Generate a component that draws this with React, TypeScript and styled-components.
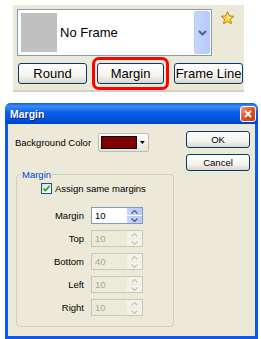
import React from 'react';
import styled, { createGlobalStyle } from 'styled-components';

const GlobalStyle = createGlobalStyle`
    html, body {
        margin: 0;
        padding: 0;
        background: #ffffff;
    }
    body {
        font-family: "Liberation Sans", Tahoma, sans-serif;
    }
`;

const Page = styled.div`
    width: 261px;
    height: 339px;
    overflow: hidden;
    display: flex;
    flex-direction: column;
`;

const TopPanel = styled.div`
    margin: 5px 0 0 13px;
    width: 231px;
    height: 87px;
    background: #ece9d8;
    border-bottom: 2px solid #d4d0c8;
    box-sizing: border-box;
    padding: 4px 0 0 4px;
    display: flex;
    flex-direction: column;
    gap: 7px;
`;

const ComboRow = styled.div`
    display: flex;
    align-items: flex-start;
    gap: 8px;
`;

const Combo = styled.div`
    width: 195px;
    height: 47px;
    box-sizing: border-box;
    border: 1px solid #7f9db9;
    background: #ffffff;
    display: flex;
    align-items: center;
    padding: 3px 1px 3px 3px;
`;

const Swatch = styled.div`
    width: 36px;
    height: 39px;
    background: #c0c0c0;
`;

const ComboText = styled.div`
    flex: 1;
    padding-left: 3px;
    font-size: 13px;
    color: #000;
`;

const DropButton = styled.div`
    width: 16px;
    height: 43px;
    border-radius: 2px;
    background: linear-gradient(to right, #c6d6fc, #b6c9f7);
    border: 1px solid #bccbf2;
    box-sizing: border-box;
    display: flex;
    align-items: center;
    justify-content: center;
`;

const StarBox = styled.div`
    padding-top: 2px;
`;

const ButtonRow = styled.div`
    display: flex;
    align-items: center;
    gap: 7px;
    padding-left: 1px;
`;

const XpButton = styled.button<{ $w: number }>`
    width: ${p => p.$w}px;
    height: 21px;
    padding: 0;
    border: 1px solid #003c74;
    border-radius: 3px;
    background: linear-gradient(to bottom, #ffffff 0%, #f5f4ef 60%, #dcd8cc 100%);
    font-family: "Liberation Sans", Tahoma, sans-serif;
    font-size: 13px;
    color: #000;
`;

const Highlight = styled.div`
    margin: -6px -2px;
    padding: 3px 2px;
    border: 3px solid #ff0000;
    border-radius: 7px;
    display: flex;
`;

const Dialog = styled.div`
    margin: 11px 0 0 5px;
    width: 253px;
    height: 236px;
    box-sizing: border-box;
    background: #0c58ea;
    border-radius: 6px 6px 0 0;
    display: flex;
    flex-direction: column;
    padding: 0 3px 3px 3px;
`;

const TitleBar = styled.div`
    height: 21px;
    margin: 0 -3px;
    padding: 0 2px 0 5px;
    border-radius: 6px 6px 0 0;
    background: linear-gradient(to bottom, #0a5fe8 0%, #3d8bf8 15%, #0a5fe8 45%, #0052dd 80%, #0042c8 100%);
    display: flex;
    align-items: center;
    justify-content: space-between;
`;

const Title = styled.div`
    font-size: 10.5px;
    font-weight: bold;
    color: #ffffff;
    text-shadow: 1px 1px 0 #0a1e80;
`;

const CloseBox = styled.div`
    width: 16px;
    height: 16px;
    box-sizing: border-box;
    border: 1px solid #ffffff;
    border-radius: 3px;
    background: linear-gradient(to bottom right, #f0a080, #e05020 50%, #c83c10);
    display: flex;
    align-items: center;
    justify-content: center;
`;

const Body = styled.div`
    flex: 1;
    background: #ece9d8;
    display: grid;
    grid-template-columns: 170px 1fr;
    padding: 7px 0 0 0;
    font-size: 9.5px;
    color: #000;
`;

const LeftCol = styled.div`
    display: flex;
    flex-direction: column;
    padding-left: 7px;
`;

const ColorRow = styled.div`
    display: flex;
    align-items: center;
    gap: 6px;
    height: 20px;
    padding-top: 1px;
`;

const ColorLabel = styled.span`
    width: 77px;
    white-space: nowrap;
`;

const ColorButton = styled.div`
    width: 51px;
    height: 19px;
    box-sizing: border-box;
    border: 1px solid #c0bdb0;
    border-radius: 2px;
    background: linear-gradient(to bottom, #ffffff, #e6e3d6);
    display: flex;
    align-items: center;
    padding: 0 3px 0 2px;
    gap: 3px;
`;

const ColorChip = styled.div<{ $c: string }>`
    width: 38px;
    height: 13px;
    background: ${p => p.$c};
    border: 1px solid #000;
    box-sizing: border-box;
`;

const Group = styled.fieldset`
    margin: 17px 0 0 1px;
    padding: 0;
    width: 158px;
    height: 158px;
    box-sizing: border-box;
    border: 1px solid #d0d0bf;
    border-radius: 4px;
`;

const Legend = styled.legend`
    margin-left: 4px;
    padding: 0 1px;
    color: #0046d5;
    font-size: 9.5px;
`;

const CheckRow = styled.div`
    display: flex;
    align-items: center;
    gap: 3px;
    margin: 1px 0 0 24px;
    height: 14px;
`;

const CheckBox = styled.div`
    width: 11px;
    height: 11px;
    box-sizing: border-box;
    border: 1px solid #1c5180;
    background: linear-gradient(to bottom right, #dcdcd7, #ffffff);
    display: flex;
    align-items: center;
    justify-content: center;
`;

const Fields = styled.div`
    display: grid;
    grid-template-columns: 67px 52px;
    column-gap: 7px;
    row-gap: 6px;
    margin-top: 12px;
    align-items: center;
`;

const FieldLabel = styled.div`
    text-align: right;
`;

const SpinBox = styled.div<{ $disabled?: boolean }>`
    height: 17px;
    box-sizing: border-box;
    border: 1px solid ${p => (p.$disabled ? '#c9c7ba' : '#7f9db9')};
    background: ${p => (p.$disabled ? '#ebeadb' : '#ffffff')};
    display: flex;
    align-items: stretch;
`;

const SpinValue = styled.div<{ $disabled?: boolean }>`
    flex: 1;
    padding-left: 3px;
    display: flex;
    align-items: center;
    color: ${p => (p.$disabled ? '#aca899' : '#000')};
`;

const SpinButtons = styled.div`
    width: 15px;
    display: flex;
    flex-direction: column;
    gap: 1px;
`;

const SpinHalf = styled.div<{ $disabled?: boolean }>`
    flex: 1;
    background: ${p => (p.$disabled ? '#f3f2ea' : 'linear-gradient(to right, #c6d6fc, #b6c9f7)')};
    display: flex;
    align-items: center;
    justify-content: center;
`;

const RightCol = styled.div`
    display: flex;
    flex-direction: column;
    gap: 6px;
    padding: 0 0 0 8px;
`;

const DlgButton = styled.button`
    width: 64px;
    height: 17px;
    padding: 0;
    border: 1px solid #003c74;
    border-radius: 3px;
    background: linear-gradient(to bottom, #ffffff 0%, #f5f4ef 60%, #dcd8cc 100%);
    font-family: "Liberation Sans", Tahoma, sans-serif;
    font-size: 9.5px;
    color: #000;
`;

const Arrow = ({ up, color }: { up: boolean; color: string }) => (
    <svg width="7" height="4" viewBox="0 0 7 4">
        <path d={up ? 'M0.5 3.5 L3.5 0.5 L6.5 3.5' : 'M0.5 0.5 L3.5 3.5 L6.5 0.5'} fill="none" stroke={color} strokeWidth="1.3" />
    </svg>
);

const Spin = ({ value, disabled }: { value: string; disabled?: boolean }) => (
    <SpinBox $disabled={disabled}>
        <SpinValue $disabled={disabled}>{value}</SpinValue>
        <SpinButtons>
            <SpinHalf $disabled={disabled}>
                <Arrow up color={disabled ? '#c9c7ba' : '#4d6185'} />
            </SpinHalf>
            <SpinHalf $disabled={disabled}>
                <Arrow up={false} color={disabled ? '#c9c7ba' : '#4d6185'} />
            </SpinHalf>
        </SpinButtons>
    </SpinBox>
);

const fields = [
    { label: 'Margin', value: '10', disabled: false },
    { label: 'Top', value: '10', disabled: true },
    { label: 'Bottom', value: '40', disabled: true },
    { label: 'Left', value: '10', disabled: true },
    { label: 'Right', value: '10', disabled: true },
];

export default function App() {
    return (
        <Page>
            <GlobalStyle />
            <TopPanel>
                <ComboRow>
                    <Combo>
                        <Swatch />
                        <ComboText>No Frame</ComboText>
                        <DropButton>
                            <svg width="9" height="6" viewBox="0 0 9 6">
                                <path d="M1 1 L4.5 4.5 L8 1" fill="none" stroke="#4d6185" strokeWidth="2" />
                            </svg>
                        </DropButton>
                    </Combo>
                    <StarBox>
                        <svg width="15" height="14" viewBox="0 0 15 14">
                            <path d="M7.5 0.8 L9.4 4.9 L13.9 5.3 L10.5 8.3 L11.5 12.8 L7.5 10.5 L3.5 12.8 L4.5 8.3 L1.1 5.3 L5.6 4.9 Z" fill="#ffd23c" stroke="#b07a10" strokeWidth="0.9" strokeLinejoin="round" />
                            <path d="M7.5 3 L8.6 5.8 L11 6.1 L7.5 8.5 Z" fill="#fff6b0" />
                        </svg>
                    </StarBox>
                </ComboRow>
                <ButtonRow>
                    <XpButton $w={69}>Round</XpButton>
                    <Highlight>
                        <XpButton $w={67}>Margin</XpButton>
                    </Highlight>
                    <XpButton $w={69}>Frame Line</XpButton>
                </ButtonRow>
            </TopPanel>
            <Dialog>
                <TitleBar>
                    <Title>Margin</Title>
                    <CloseBox>
                        <svg width="8" height="8" viewBox="0 0 8 8">
                            <path d="M1 1 L7 7 M7 1 L1 7" stroke="#fff" strokeWidth="1.8" />
                        </svg>
                    </CloseBox>
                </TitleBar>
                <Body>
                    <LeftCol>
                        <ColorRow>
                            <ColorLabel>Background Color</ColorLabel>
                            <ColorButton>
                                <ColorChip $c="#800000" />
                                <svg width="5" height="3" viewBox="0 0 5 3">
                                    <path d="M0 0 L5 0 L2.5 3 Z" fill="#000" />
                                </svg>
                            </ColorButton>
                        </ColorRow>
                        <Group>
                            <Legend>Margin</Legend>
                            <CheckRow>
                                <CheckBox>
                                    <svg width="7" height="7" viewBox="0 0 7 7">
                                        <path d="M0.5 3.5 L2.5 5.5 L6.5 1" fill="none" stroke="#21a121" strokeWidth="1.6" />
                                    </svg>
                                </CheckBox>
                                <span>Assign same margins</span>
                            </CheckRow>
                            <Fields>
                                {fields.map(f => (
                                    <React.Fragment key={f.label}>
                                        <FieldLabel>{f.label}</FieldLabel>
                                        <Spin value={f.value} disabled={f.disabled} />
                                    </React.Fragment>
                                ))}
                            </Fields>
                        </Group>
                    </LeftCol>
                    <RightCol>
                        <DlgButton>OK</DlgButton>
                        <DlgButton>Cancel</DlgButton>
                    </RightCol>
                </Body>
            </Dialog>
        </Page>
    );
}
